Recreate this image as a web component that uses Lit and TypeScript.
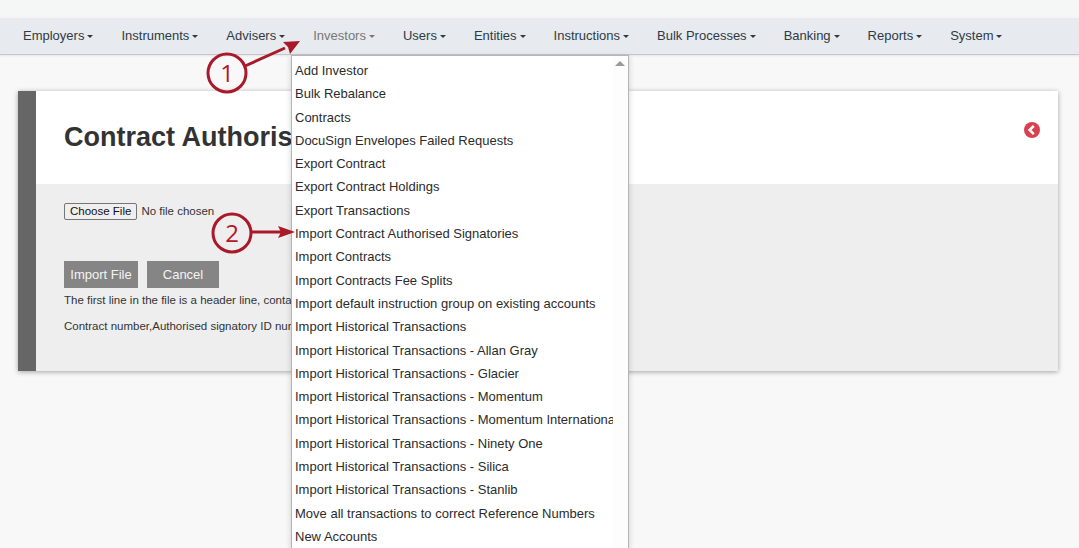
import { LitElement, html, css, svg } from 'lit';
import { customElement } from 'lit/decorators.js';

const navItems = ['Employers', 'Instruments', 'Advisers', 'Investors', 'Users', 'Entities', 'Instructions', 'Bulk Processes', 'Banking', 'Reports', 'System'];

const menuItems = [
  'Add Investor',
  'Bulk Rebalance',
  'Contracts',
  'DocuSign Envelopes Failed Requests',
  'Export Contract',
  'Export Contract Holdings',
  'Export Transactions',
  'Import Contract Authorised Signatories',
  'Import Contracts',
  'Import Contracts Fee Splits',
  'Import default instruction group on existing accounts',
  'Import Historical Transactions',
  'Import Historical Transactions - Allan Gray',
  'Import Historical Transactions - Glacier',
  'Import Historical Transactions - Momentum',
  'Import Historical Transactions - Momentum International',
  'Import Historical Transactions - Ninety One',
  'Import Historical Transactions - Silica',
  'Import Historical Transactions - Stanlib',
  'Move all transactions to correct Reference Numbers',
  'New Accounts',
  'Online Applications',
];

@customElement('app-root')
export class AppRoot extends LitElement {
  static styles = css`
    :host {
      display: block;
      position: relative;
      width: 1079px;
      height: 548px;
      overflow: hidden;
      background: #f8f8f8;
      font-family: 'Liberation Sans', Arial, sans-serif;
      font-size: 13px;
      color: #333;
    }

    .top-strip {
      height: 18px;
      background: #f5f6f6;
    }

    .navbar {
      display: flex;
      height: 37px;
      padding-left: 9px;
      background: #e7eaee;
      border-bottom: 1px solid #c4c6c8;
      box-sizing: border-box;
      box-shadow: 0 1px 2px rgba(0, 0, 0, 0.08);
    }

    .nav-item {
      display: flex;
      align-items: center;
      padding: 0 14px 1px;
      color: #2f3a45;
      white-space: nowrap;
    }

    .nav-item.active {
      color: #777;
    }

    .caret {
      width: 0;
      height: 0;
      margin-left: 3px;
      margin-top: 2px;
      border-top: 3px solid currentColor;
      border-left: 3px solid transparent;
      border-right: 3px solid transparent;
    }

    .page {
      padding: 36px 21px 0 18px;
    }

    .card {
      display: flex;
      height: 280px;
      border-left: 18px solid #666;
      box-shadow: 0 1px 5px rgba(0, 0, 0, 0.35);
    }

    .card-main {
      flex: 1;
      display: flex;
      flex-direction: column;
    }

    .card-head {
      display: flex;
      justify-content: space-between;
      height: 93px;
      padding: 30px 18px 0 28px;
      box-sizing: border-box;
      background: #fff;
    }

    h1 {
      margin: 0;
      font-size: 27px;
      line-height: 32px;
      font-weight: 700;
      color: #333;
    }

    .back {
      margin-top: 1px;
    }

    .card-body {
      flex: 1;
      padding: 19px 28px 0;
      background: #eee;
    }

    .file-row {
      display: flex;
      align-items: center;
      height: 16px;
      color: #333;
      font-size: 11.5px;
    }

    .file-btn {
      height: 17px;
      padding: 0 5px;
      margin-right: 4px;
      background: #efefef;
      border: 1px solid #767676;
      border-radius: 2px;
      font: 11.5px 'Liberation Sans', Arial, sans-serif;
      color: #111;
    }

    .actions {
      display: flex;
      gap: 9px;
      margin-top: 42px;
    }

    .btn {
      display: flex;
      align-items: center;
      justify-content: center;
      height: 27px;
      background: #858585;
      color: #f4f4f4;
      font-size: 13px;
    }

    .btn.import {
      width: 74px;
    }

    .btn.cancel {
      width: 72px;
    }

    p {
      margin: 0;
      font-size: 11.5px;
      line-height: 16px;
      white-space: nowrap;
      color: #333;
    }

    .line-one {
      margin-top: 4px;
    }

    .line-two {
      margin-top: 10px;
    }

    .menu {
      position: absolute;
      left: 291px;
      top: 55px;
      width: 338px;
      height: 493px;
      box-sizing: border-box;
      overflow: hidden;
      background: #fff;
      border: 1px solid #b5b5b5;
      border-bottom: none;
      box-shadow: 0 2px 6px rgba(0, 0, 0, 0.18);
      padding-top: 3px;
    }

    .menu-item {
      height: 23.3px;
      line-height: 23.3px;
      padding-left: 3px;
      color: #2b2b2b;
      white-space: nowrap;
    }

    .scroll-track {
      position: absolute;
      top: 0;
      right: 0;
      bottom: 0;
      width: 15px;
      background: #fdfdfd;
    }

    .scroll-up {
      position: absolute;
      top: 5px;
      left: 2px;
      width: 0;
      height: 0;
      border-bottom: 5px solid #9a9a9a;
      border-left: 5px solid transparent;
      border-right: 5px solid transparent;
    }

    .notes {
      position: absolute;
      left: 0;
      top: 0;
      pointer-events: none;
    }

    .notes text {
      font-family: 'Open Sans', sans-serif;
      font-size: 24px;
      fill: #b3172a;
      text-anchor: middle;
    }
  `;

  renderNotes() {
    return svg`
      <circle cx="227" cy="73" r="19" fill="none" stroke="#a9192a" stroke-width="3"></circle>
      <text x="227" y="82">1</text>
      <path d="M245 66 L285 48" stroke="#a9192a" stroke-width="3" fill="none"></path>
      <path d="M300 41 L283 42 L288 47 L290 54 Z" fill="#a9192a"></path>
      <circle cx="232" cy="233" r="19" fill="none" stroke="#a9192a" stroke-width="3"></circle>
      <text x="232" y="242">2</text>
      <path d="M251 232 L282 232" stroke="#a9192a" stroke-width="3" fill="none"></path>
      <path d="M295 232 L278 226 L281 232 L278 238 Z" fill="#a9192a"></path>
    `;
  }

  render() {
    return html`
      <div class="top-strip"></div>
      <nav class="navbar">
        ${navItems.map(i => html`
          <div class="nav-item ${i === 'Investors' ? 'active' : ''}">${i}<span class="caret"></span></div>
        `)}
      </nav>

      <div class="page">
        <section class="card">
          <div class="card-main">
            <header class="card-head">
              <h1>Contract Authorised Signatories</h1>
              <svg class="back" width="16" height="16" viewBox="0 0 16 16">
                <circle cx="8" cy="8" r="8" fill="#dc3f50"></circle>
                <path d="M9.8 3.8 L5.6 8 L9.8 12.2" fill="none" stroke="#fff" stroke-width="2.6"></path>
              </svg>
            </header>
            <div class="card-body">
              <div class="file-row">
                <button class="file-btn">Choose File</button>No file chosen
              </div>
              <div class="actions">
                <div class="btn import">Import File</div>
                <div class="btn cancel">Cancel</div>
              </div>
              <p class="line-one">The first line in the file is a header line, containing column names.</p>
              <p class="line-two">Contract number,Authorised signatory ID number</p>
            </div>
          </div>
        </section>
      </div>

      <div class="menu">
        ${menuItems.map(i => html`<div class="menu-item">${i}</div>`)}
        <div class="scroll-track"><div class="scroll-up"></div></div>
      </div>

      <svg class="notes" width="1079" height="548">${this.renderNotes()}</svg>
    `;
  }
}
